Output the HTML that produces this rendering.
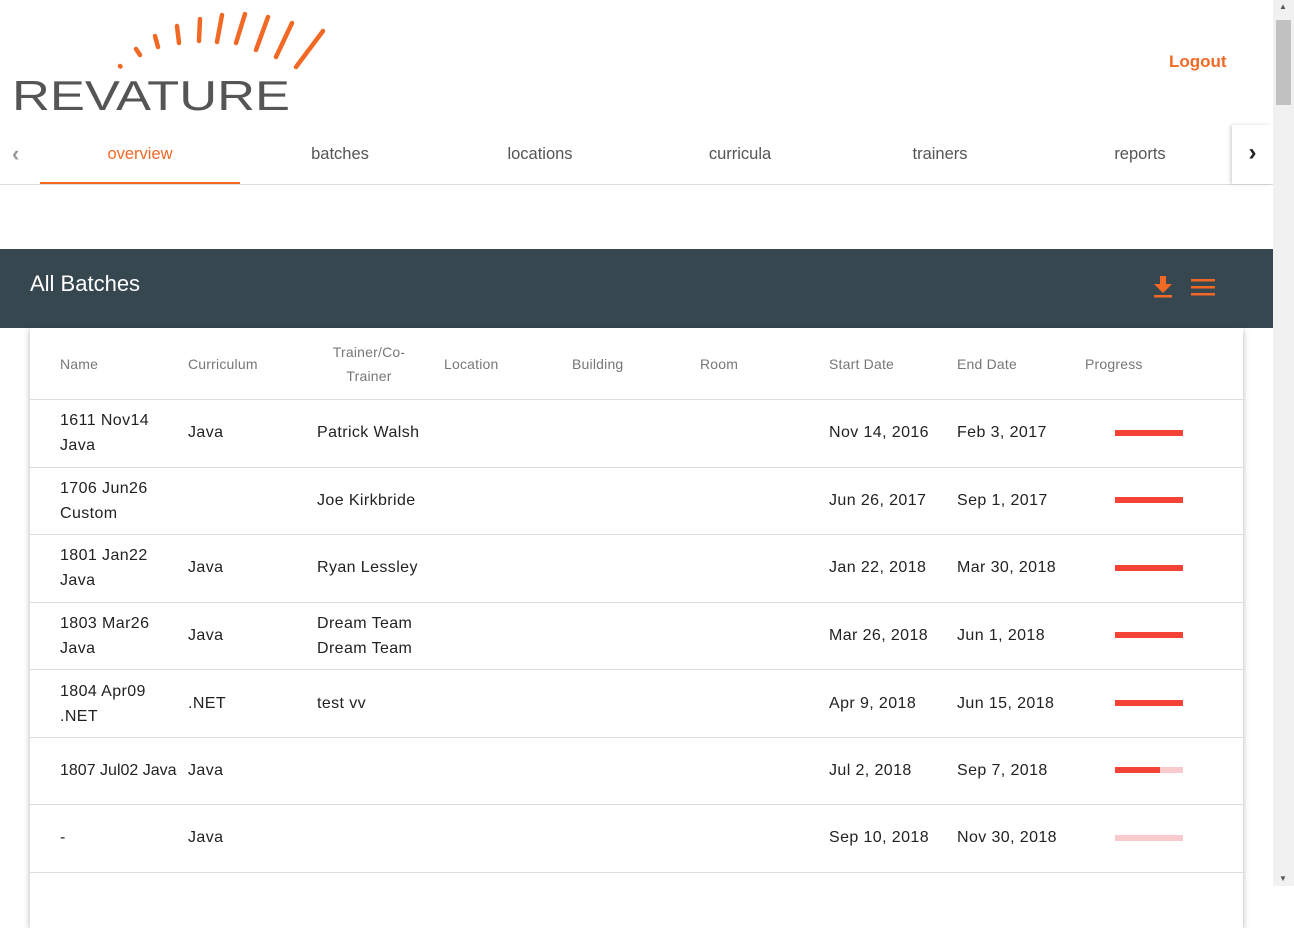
<!DOCTYPE html>
<html><head><style>
body{margin:0;width:1294px;height:886px;overflow:hidden;font-family:"Liberation Sans",sans-serif;background:#fff;position:relative}
.sb{position:absolute;right:0;top:0;width:21px;height:886px;background:#f1f1f1}
.sb .th{position:absolute;left:3px;top:20px;width:15px;height:85px;background:#c1c1c1}
.logout{position:absolute;left:1169px;top:52px;color:#f26925;font-weight:bold;font-size:17px}
.tabs{position:absolute;left:0;top:125px;width:1273px;height:59px;border-bottom:1px solid #ddd}
.tab{position:absolute;top:0;width:200px;height:59px;line-height:58px;text-align:center;font-size:16.5px;color:#555}
.tab.a{color:#f26925;border-bottom:2px solid #f26925;height:57px}
.hdr{position:absolute;left:0;top:249px;width:1273px;height:79px;background:#37474f}
.hdr h1{margin:0;position:absolute;left:30px;top:22px;color:#fff;font-weight:normal;font-size:22px}
.card{position:absolute;left:30px;top:328px;width:1213px;height:600px;background:#fff;box-shadow:0 2px 6px rgba(0,0,0,.3)}
.row{position:absolute;left:0;width:1213px;border-bottom:1px solid #ddd}
.c{position:absolute;font-size:16px;color:#222;line-height:25px;letter-spacing:0.4px;white-space:nowrap}
.h{position:absolute;font-size:14px;color:#777;line-height:24px;letter-spacing:0.2px}
.bar{position:absolute;left:1085px;width:68px;height:6px;background:#f8c9cd}
.bar i{display:block;height:6px;background:#f44336}
</style></head><body>
<svg style="position:absolute;left:0;top:0" width="340" height="120">
<g stroke="#f26925" stroke-width="4.5" stroke-linecap="round">
<line x1="120" y1="66" x2="120.5" y2="66.5"/>
<line x1="136" y1="49" x2="140" y2="55"/>
<line x1="155" y1="36" x2="158" y2="47"/>
<line x1="177" y1="26" x2="179" y2="43"/>
<line x1="200" y1="19" x2="199" y2="41"/>
<line x1="222" y1="15" x2="217" y2="42"/>
<line x1="245" y1="14" x2="236" y2="43"/>
<line x1="268" y1="17" x2="256" y2="50"/>
<line x1="292" y1="23" x2="276" y2="57"/>
<line x1="323" y1="31" x2="296" y2="67"/>
</g>
<text x="12" y="110" font-family="Liberation Sans" font-size="42" fill="#555" textLength="278" lengthAdjust="spacingAndGlyphs">REVATURE</text>
</svg>
<div class="logout">Logout</div>
<div class="tabs">
<div style="position:absolute;left:12px;top:16px;color:#999;font-size:22px;font-weight:bold">&#8249;</div>
<div class="tab a" style="left:40px">overview</div>
<div class="tab" style="left:240px">batches</div>
<div class="tab" style="left:440px">locations</div>
<div class="tab" style="left:640px">curricula</div>
<div class="tab" style="left:840px">trainers</div>
<div class="tab" style="left:1040px">reports</div>
<div style="position:absolute;left:1232px;top:0;width:41px;height:59px;background:#fff;box-shadow:-2px 0 3px rgba(0,0,0,.15);text-align:center;line-height:56px;font-size:24px;color:#222;font-weight:bold">&#8250;</div>
</div>
<div class="hdr"><h1>All Batches</h1>
<svg style="position:absolute;left:1152px;top:27px" width="70" height="24">
<rect x="8" y="0" width="6" height="8" fill="#f26925"/><polygon points="2,8 20,8 11,17" fill="#f26925"/><rect x="2" y="19" width="18" height="2.5" fill="#f26925"/>
<rect x="39" y="3" width="24" height="2.5" fill="#f26925"/><rect x="39" y="10" width="24" height="2.5" fill="#f26925"/><rect x="39" y="17" width="24" height="2.5" fill="#f26925"/>
</svg></div>
<div class="card">
<div class="row" style="top:0;height:71px">
<div class="h" style="left:30px;top:24px">Name</div>
<div class="h" style="left:158px;top:24px">Curriculum</div>
<div class="h" style="left:296px;top:12px;width:86px;text-align:center">Trainer/Co-Trainer</div>
<div class="h" style="left:414px;top:24px">Location</div>
<div class="h" style="left:542px;top:24px">Building</div>
<div class="h" style="left:670px;top:24px">Room</div>
<div class="h" style="left:799px;top:24px">Start Date</div>
<div class="h" style="left:927px;top:24px">End Date</div>
<div class="h" style="left:1055px;top:24px">Progress</div>
</div>
<div class="row" style="top:72px;height:67px"><div class="c" style="left:30px;top:8px">1611 Nov14<br>Java</div><div class="c" style="left:158px;top:20px">Java</div><div class="c" style="left:287px;top:20px">Patrick Walsh</div><div class="c" style="left:799px;top:20px">Nov 14, 2016</div><div class="c" style="left:927px;top:20px">Feb 3, 2017</div><div class="bar" style="top:30px"><i style="width:100%"></i></div></div>
<div class="row" style="top:140px;height:66px"><div class="c" style="left:30px;top:8px">1706 Jun26<br>Custom</div><div class="c" style="left:287px;top:20px">Joe Kirkbride</div><div class="c" style="left:799px;top:20px">Jun 26, 2017</div><div class="c" style="left:927px;top:20px">Sep 1, 2017</div><div class="bar" style="top:29px"><i style="width:100%"></i></div></div>
<div class="row" style="top:207px;height:67px"><div class="c" style="left:30px;top:8px">1801 Jan22<br>Java</div><div class="c" style="left:158px;top:20px">Java</div><div class="c" style="left:287px;top:20px">Ryan Lessley</div><div class="c" style="left:799px;top:20px">Jan 22, 2018</div><div class="c" style="left:927px;top:20px">Mar 30, 2018</div><div class="bar" style="top:30px"><i style="width:100%"></i></div></div>
<div class="row" style="top:275px;height:66px"><div class="c" style="left:30px;top:8px">1803 Mar26<br>Java</div><div class="c" style="left:158px;top:20px">Java</div><div class="c" style="left:287px;top:8px">Dream Team<br>Dream Team</div><div class="c" style="left:799px;top:20px">Mar 26, 2018</div><div class="c" style="left:927px;top:20px">Jun 1, 2018</div><div class="bar" style="top:29px"><i style="width:100%"></i></div></div>
<div class="row" style="top:342px;height:67px"><div class="c" style="left:30px;top:9px">1804 Apr09<br>.NET</div><div class="c" style="left:158px;top:21px">.NET</div><div class="c" style="left:287px;top:21px">test vv</div><div class="c" style="left:799px;top:21px">Apr 9, 2018</div><div class="c" style="left:927px;top:21px">Jun 15, 2018</div><div class="bar" style="top:30px"><i style="width:100%"></i></div></div>
<div class="row" style="top:410px;height:66px"><div class="c" style="left:30px;top:20px;letter-spacing:0">1807 Jul02 Java</div><div class="c" style="left:158px;top:20px">Java</div><div class="c" style="left:799px;top:20px">Jul 2, 2018</div><div class="c" style="left:927px;top:20px">Sep 7, 2018</div><div class="bar" style="top:29px"><i style="width:66%"></i></div></div>
<div class="row" style="top:477px;height:67px"><div class="c" style="left:30px;top:20px">-</div><div class="c" style="left:158px;top:20px">Java</div><div class="c" style="left:799px;top:20px">Sep 10, 2018</div><div class="c" style="left:927px;top:20px">Nov 30, 2018</div><div class="bar" style="top:30px"></div></div>
</div>
<div class="sb"><div class="th"></div><div style="position:absolute;top:2px;left:6px;font-size:8px;color:#555">&#9650;</div><div style="position:absolute;bottom:3px;left:6px;font-size:8px;color:#555">&#9660;</div></div>
</body></html>
